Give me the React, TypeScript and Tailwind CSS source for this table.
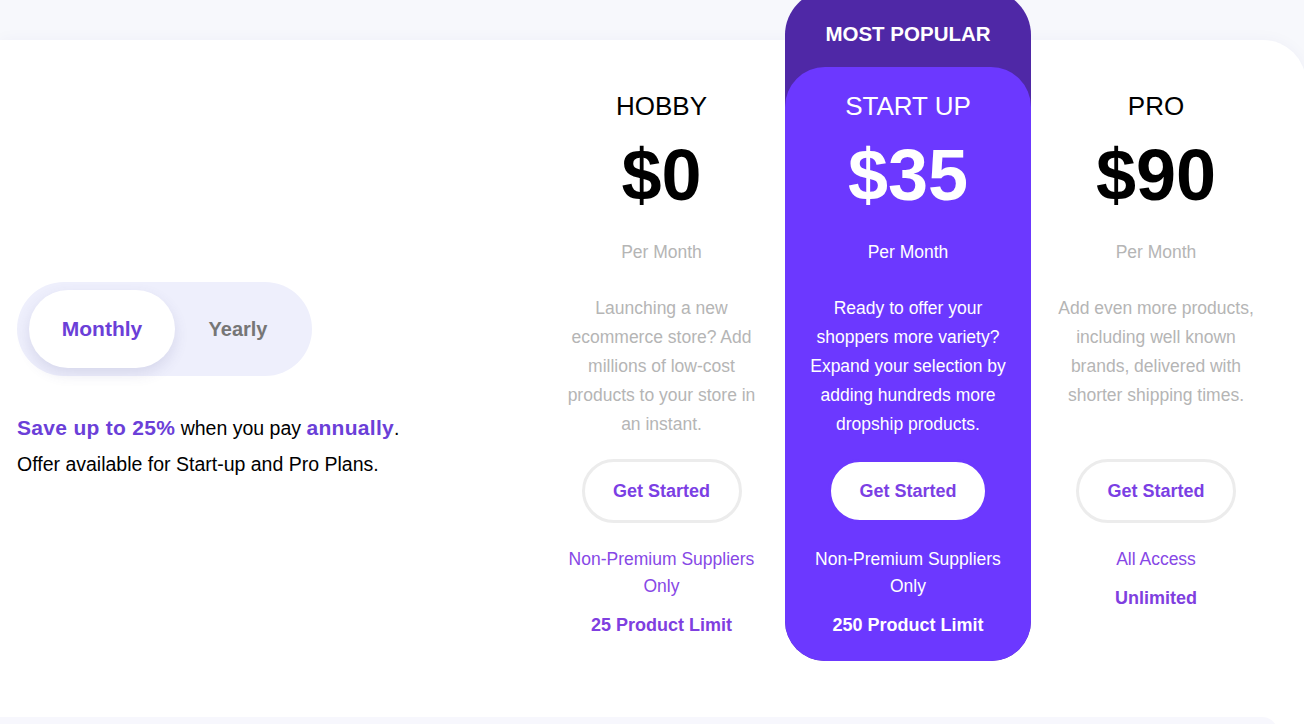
import React from "react";

const font = { fontFamily: '"Liberation Sans", Arial, Helvetica, sans-serif' };

type Plan = {
  name: string;
  price: string;
  desc: string;
  feature: string;
  limit: string;
  popular?: boolean;
};

const plans: Plan[] = [
  {
    name: "HOBBY",
    price: "$0",
    desc: "Launching a new ecommerce store? Add millions of low-cost products to your store in an instant.",
    feature: "Non-Premium Suppliers Only",
    limit: "25 Product Limit",
  },
  {
    name: "START UP",
    price: "$35",
    desc: "Ready to offer your shoppers more variety? Expand your selection by adding hundreds more dropship products.",
    feature: "Non-Premium Suppliers Only",
    limit: "250 Product Limit",
    popular: true,
  },
  {
    name: "PRO",
    price: "$90",
    desc: "Add even more products, including well known brands, delivered with shorter shipping times.",
    feature: "All Access",
    limit: "Unlimited",
  },
];

function PlanContent({ plan }: { plan: Plan }) {
  const p = plan.popular;
  return (
    <div className="flex flex-col items-center text-center">
      <div className={`mt-[24px] text-[26px] leading-[30px] ${p ? "text-white" : "text-black"}`}>{plan.name}</div>
      <div className={`mt-[18px] text-[72px] leading-[72px] font-bold ${p ? "text-white" : "text-black"}`}>
        {plan.price}
      </div>
      <div className={`mt-[29px] text-[17.5px] leading-[24px] ${p ? "text-white" : "text-[#b5b5b5]"}`}>Per Month</div>
      <div className={`mt-[30px] h-[145px] w-[205px] text-[17.5px] leading-[29px] ${p ? "text-white" : "text-[#b5b5b5]"}`}>
        {plan.desc}
      </div>
      <button
        className={`mt-[20px] h-[64px] w-[160px] rounded-full border-[3px] bg-white text-[18px] font-bold text-[#7b3fe4] ${
          p ? "border-[#6c38ff]" : "border-[#ececec]"
        }`}
      >
        Get Started
      </button>
      <div className={`mt-[23px] w-[205px] text-[17.5px] leading-[27px] ${p ? "text-white" : "text-[#8748e6]"}`}>
        {plan.feature}
      </div>
      <div className={`mt-[13px] text-[18px] leading-[24px] font-bold ${p ? "text-white" : "text-[#7f3fe0]"}`}>
        {plan.limit}
      </div>
    </div>
  );
}

export default function App() {
  return (
    <div className="min-h-[724px] w-full overflow-hidden bg-[#f7f8fc] pt-[40px]" style={font}>
      <div className="w-[1306px] rounded-tr-[43px] bg-white shadow-[0_0_16px_rgba(60,60,120,0.04)]">
        <div className="flex h-[677px] items-start">
          {/* Left column */}
          <div className="w-[538px] pt-[242px] pl-[17px]">
            <div className="flex h-[94px] w-[295px] items-center rounded-full bg-[#eeeffc] pl-[12px]">
              <div className="flex h-[78px] w-[146px] items-center justify-center rounded-full bg-white text-[21px] font-bold text-[#6b3fd8] shadow-[0_6px_14px_rgba(80,80,140,0.14)]">
                Monthly
              </div>
              <div className="flex h-[78px] w-[126px] items-center justify-center text-[20px] font-bold text-[#767676]">
                Yearly
              </div>
            </div>
            <div className="mt-[34px] text-[19.5px] leading-[36px] text-black">
              <span className="text-[21px] font-bold tracking-[0.3px] text-[#6b3fd8]">Save up to 25%</span> when you pay{" "}
              <span className="text-[21px] font-bold tracking-[0.3px] text-[#6b3fd8]">annually</span>.
            </div>
            <div className="text-[19.5px] leading-[36px] text-black">Offer available for Start-up and Pro Plans.</div>
          </div>

          {/* Hobby */}
          <div className="w-[247px] pt-[27px]">
            <PlanContent plan={plans[0]} />
          </div>

          {/* Start up */}
          <div className="mt-[-50px] w-[246px] rounded-t-[45px] rounded-b-[40px] bg-[#4f28a6]">
            <div className="h-[77px] pt-[32px] text-center text-[20.5px] leading-[24px] font-bold text-white">
              MOST POPULAR
            </div>
            <div className="h-[594px] rounded-[40px] bg-[#6c38ff]">
              <PlanContent plan={plans[1]} />
            </div>
          </div>

          {/* Pro */}
          <div className="w-[250px] pt-[27px]">
            <PlanContent plan={plans[2]} />
          </div>
        </div>
        <div className="h-[40px] w-[1278px] rounded-tr-[16px] bg-[#f7f7fd]"></div>
      </div>
    </div>
  );
}
